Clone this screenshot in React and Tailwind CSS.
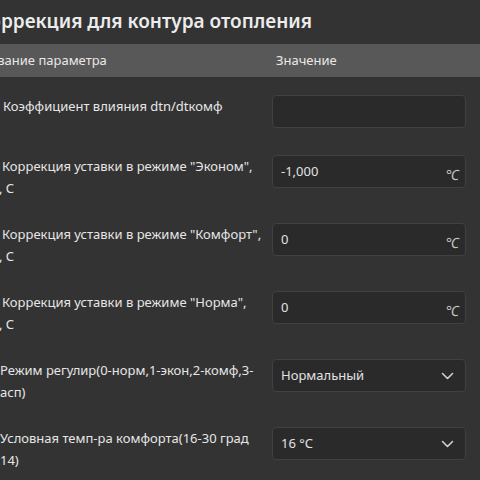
import React from "react";

const rows = [
  { lines: ["Коэффициент влияния dtn/dtкомф"], kind: "input", value: "", unit: false, pl: "pl-[3px]" },
  { lines: ['Коррекция уставки в режиме "Эконом",', ", С"], kind: "input", value: "-1,000", unit: true, pl: "pl-[2px]", shift: true },
  { lines: ['Коррекция уставки в режиме "Комфорт",', ", С"], kind: "input", value: "0", unit: true, pl: "pl-[2px]", shift: true },
  { lines: ['Коррекция уставки в режиме "Норма",', ", С"], kind: "input", value: "0", unit: true, pl: "pl-[2px]", shift: true },
  { lines: ["Режим регулир(0-норм,1-экон,2-комф,3-", "асп)"], kind: "select", value: "Нормальный", pl: "pl-0" },
  { lines: ["Условная темп-ра комфорта(16-30 град", "14)"], kind: "select", value: "16 °C", pl: "pl-0" },
];

function Chevron() {
  return (
    <svg width="13" height="8" viewBox="0 0 13 8" fill="none">
      <polyline points="1.5,1.5 6.5,6.5 11.5,1.5" stroke="#d0d0d0" strokeWidth="1.6" strokeLinecap="round" strokeLinejoin="round" />
    </svg>
  );
}

function Field({ row }) {
  return (
    <div className="ml-2 w-[194px] h-[33px] rounded-[4px] border border-[#414141] bg-[#2a2a2a] flex items-center pl-2 pr-[12px] text-[13px] text-[#e2e2e2]">
      <span className="flex-1 whitespace-nowrap">{row.value}</span>
      {row.kind === "input" && row.unit && (
        <span className="text-[14px] italic text-[#c4c4c4] mt-[5px] -mr-[6px]">℃</span>
      )}
      {row.kind === "select" && (
        <span className="-mr-[1px] flex items-center">
          <Chevron />
        </span>
      )}
    </div>
  );
}

export default function App() {
  return (
    <div
      className="w-[480px] h-[480px] overflow-hidden bg-[#333333] text-[#e4e4e4]"
      style={{ fontFamily: '"Noto Sans", "Open Sans", sans-serif' }}
    >
      <div className="h-[44px] flex items-center overflow-hidden">
        <h1 className="ml-[-23px] whitespace-nowrap text-[19px] font-semibold text-[#ececec] leading-[28px] mt-[-2px]">
          Коррекция для контура отопления
        </h1>
      </div>
      <div className="grid grid-cols-[264px_216px] h-[33px] bg-[#585858] items-center text-[13px] text-[#e8e8e8]">
        <div className="overflow-hidden whitespace-nowrap">
          <span className="ml-[-26px] inline-block">Название параметра</span>
        </div>
        <div className="pl-3">Значение</div>
      </div>
      <div className="pt-[6px]">
        {rows.map((row, i) => (
          <div key={i} className="grid grid-cols-[264px_216px] items-start py-3 min-h-[60px]">
            <div className={`${row.pl} text-[13px] leading-[22px] text-[#e6e6e6] whitespace-nowrap`}>
              {row.lines.map((l, j) => (
                <div key={j} className={j === 1 && row.shift ? "-ml-[3px]" : ""}>{l}</div>
              ))}
            </div>
            <Field row={row} />
          </div>
        ))}
      </div>
    </div>
  );
}
